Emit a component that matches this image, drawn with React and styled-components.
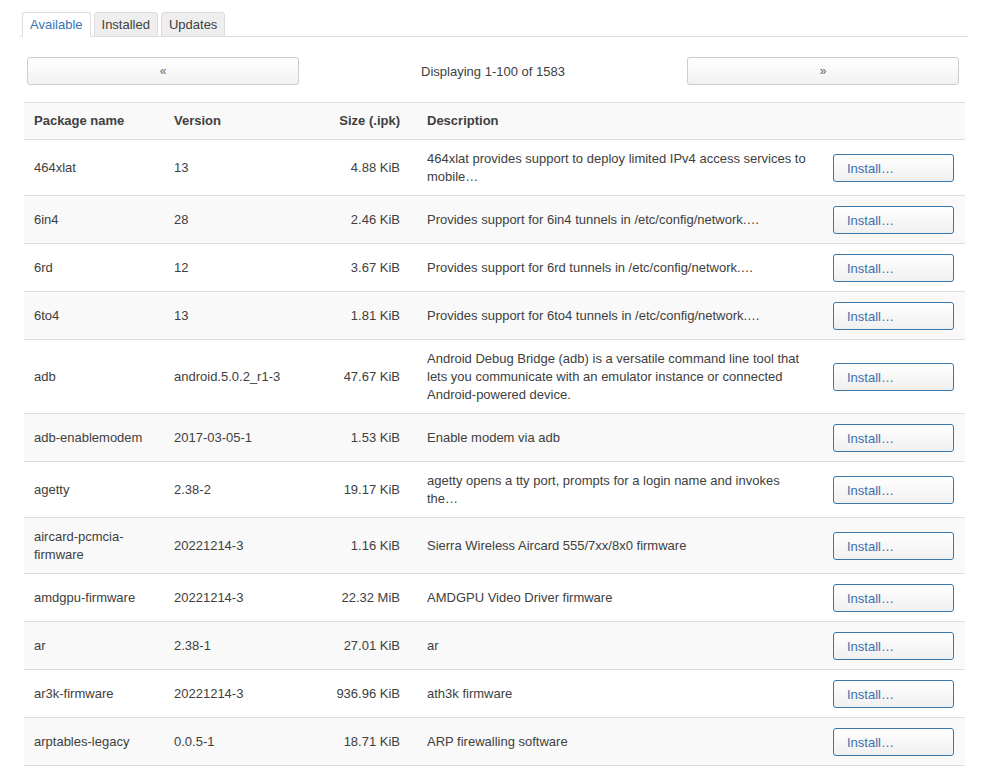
import React from 'react';
import styled, { createGlobalStyle } from 'styled-components';

const packages = [
  { name: '464xlat', version: '13', size: '4.88 KiB', desc: '464xlat provides support to deploy limited IPv4 access services to mobile…' },
  { name: '6in4', version: '28', size: '2.46 KiB', desc: 'Provides support for 6in4 tunnels in /etc/config/network.…' },
  { name: '6rd', version: '12', size: '3.67 KiB', desc: 'Provides support for 6rd tunnels in /etc/config/network.…' },
  { name: '6to4', version: '13', size: '1.81 KiB', desc: 'Provides support for 6to4 tunnels in /etc/config/network.…' },
  { name: 'adb', version: 'android.5.0.2_r1-3', size: '47.67 KiB', desc: 'Android Debug Bridge (adb) is a versatile command line tool that lets you communicate with an emulator instance or connected Android-powered device.' },
  { name: 'adb-enablemodem', version: '2017-03-05-1', size: '1.53 KiB', desc: 'Enable modem via adb' },
  { name: 'agetty', version: '2.38-2', size: '19.17 KiB', desc: 'agetty opens a tty port, prompts for a login name and invokes the…' },
  { name: 'aircard-pcmcia-firmware', version: '20221214-3', size: '1.16 KiB', desc: 'Sierra Wireless Aircard 555/7xx/8x0 firmware' },
  { name: 'amdgpu-firmware', version: '20221214-3', size: '22.32 MiB', desc: 'AMDGPU Video Driver firmware' },
  { name: 'ar', version: '2.38-1', size: '27.01 KiB', desc: 'ar' },
  { name: 'ar3k-firmware', version: '20221214-3', size: '936.96 KiB', desc: 'ath3k firmware' },
  { name: 'arptables-legacy', version: '0.0.5-1', size: '18.71 KiB', desc: 'ARP firewalling software' },
];

const GlobalStyle = createGlobalStyle`
  body {
    margin: 0;
    background: #fff;
    font-family: "Liberation Sans", Arial, sans-serif;
    font-size: 13px;
    color: #404040;
  }
`;

const Page = styled.div`
  padding: 12px 19px 0 20px;
`;

const Tabs = styled.ul`
  display: flex;
  gap: 3px;
  list-style: none;
  margin: 0;
  padding: 0 0 0 2px;
  border-bottom: 1px solid #ddd;
`;

const Tab = styled.li`
  margin-bottom: -1px;
  padding: 0 7px;
  height: 23px;
  line-height: 23px;
  border: 1px solid #ddd;
  border-bottom-color: ${p => (p.$active ? '#fff' : '#ddd')};
  border-radius: 3px 3px 0 0;
  background: ${p => (p.$active ? '#fff' : '#eee')};
  color: ${p => (p.$active ? '#3774b1' : '#404040')};
  cursor: pointer;
`;

const Pager = styled.div`
  display: grid;
  grid-template-columns: 272px 1fr 272px;
  align-items: center;
  margin: 20px 9px 17px 7px;
`;

const PageButton = styled.button`
  height: 28px;
  border: 1px solid #ccc;
  border-radius: 3px;
  background: linear-gradient(#fff, #f2f2f2);
  color: #666;
  font-family: inherit;
  font-size: 12px;
  cursor: pointer;
`;

const PageInfo = styled.div`
  text-align: center;
`;

const Table = styled.table`
  width: 941px;
  margin-left: 4px;
  border-collapse: collapse;
  table-layout: fixed;
`;

const Row = styled.tr`
  border-top: 1px solid #ddd;
  border-bottom: 1px solid #ddd;
  &:nth-child(even) {
    background: #f9f9f9;
  }
`;

const HeadRow = styled.tr`
  background: #f9f9f9;
  border-top: 1px solid #ddd;
  border-bottom: 1px solid #ddd;
`;

const Th = styled.th`
  padding: 9px 10px 10px;
  line-height: 17px;
  font-weight: bold;
  text-align: ${p => p.$align || 'left'};
  padding-right: ${p => p.$pr || '10px'};
  vertical-align: middle;
`;

const Td = styled.td`
  padding: 10px 10px 9px;
  line-height: 18px;
  text-align: ${p => p.$align || 'left'};
  padding-right: ${p => p.$pr || '10px'};
  vertical-align: middle;
`;

const InstallButton = styled.button`
  display: block;
  width: 121px;
  height: 28px;
  padding: 0 0 0 13px;
  text-align: left;
  border: 1px solid #3a77ab;
  border-radius: 3px;
  background: linear-gradient(#fff, #f0f0f0);
  color: #3a6fb0;
  font-family: inherit;
  font-size: 13px;
  cursor: pointer;
`;

export default function App() {
  return (
    <>
      <GlobalStyle />
      <Page>
        <Tabs>
          <Tab $active>Available</Tab>
          <Tab>Installed</Tab>
          <Tab>Updates</Tab>
        </Tabs>
        <Pager>
          <PageButton>«</PageButton>
          <PageInfo>Displaying 1-100 of 1583</PageInfo>
          <PageButton>»</PageButton>
        </Pager>
        <Table>
          <colgroup>
            <col style={{ width: 140 }} />
            <col style={{ width: 160 }} />
            <col style={{ width: 93 }} />
            <col style={{ width: 406 }} />
            <col style={{ width: 142 }} />
          </colgroup>
          <thead>
            <HeadRow>
              <Th>Package name</Th>
              <Th>Version</Th>
              <Th $align="right" $pr="17px">Size (.ipk)</Th>
              <Th>Description</Th>
              <Th />
            </HeadRow>
          </thead>
          <tbody>
            {packages.map(p => (
              <Row key={p.name}>
                <Td>{p.name}</Td>
                <Td>{p.version}</Td>
                <Td $align="right" $pr="17px">{p.size}</Td>
                <Td>{p.desc}</Td>
                <Td>
                  <InstallButton>Install…</InstallButton>
                </Td>
              </Row>
            ))}
          </tbody>
        </Table>
      </Page>
    </>
  );
}
